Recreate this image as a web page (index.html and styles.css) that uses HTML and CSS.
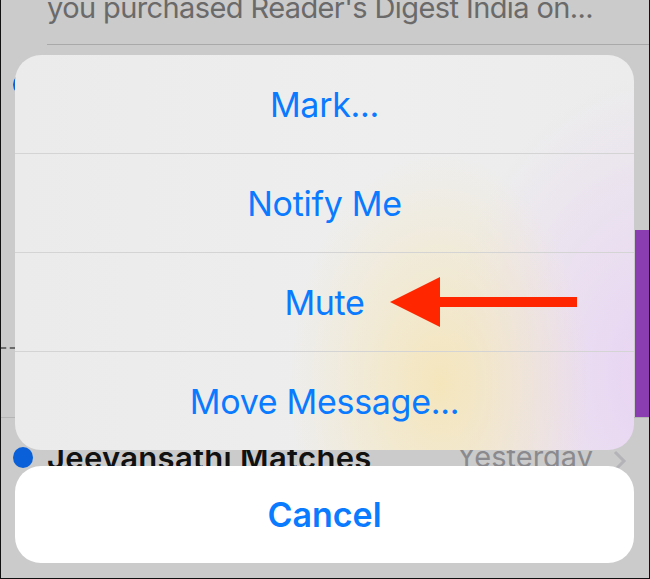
FILE: index.html
```html
<!DOCTYPE html>
<html>
<head>
<meta charset="utf-8">
<link rel="stylesheet" href="styles.css">
</head>
<body>
<div class="screen">
  <div class="list">
    <div class="preview-row">
      <div class="preview">you purchased Reader's Digest India on...</div>
    </div>
    <div class="mail-row">
      <div class="lead">
        <span class="dot dot-top"></span>
        <span class="dash"></span>
      </div>
      <div class="trail">
        <div class="swipe"></div>
      </div>
    </div>
    <div class="mail-row2">
      <span class="dot"></span>
      <span class="sender">Jeevansathi Matches</span>
      <span class="date">Yesterday</span>
      <svg class="chev" width="14" height="22" viewBox="0 0 14 22"><path d="M2 2 L11 11 L2 20" fill="none" stroke="#b3b3b8" stroke-width="3"/></svg>
    </div>
  </div>

  <div class="sheet">
    <div class="group">
      <div class="action">Mark...</div>
      <div class="action">Notify Me</div>
      <div class="action">Mute</div>
      <div class="action">Move Message...</div>
    </div>
    <div class="cancel">Cancel</div>
  </div>

  <svg class="arrow" width="200" height="60" viewBox="0 0 200 60">
    <polygon points="0,25 50,0 50,20 187,20 187,30 50,30 50,50" fill="#ff2600"/>
  </svg>
</div>
</body>
</html>
```

FILE: styles.css
```css
* { box-sizing: border-box; }
html, body { margin: 0; padding: 0; background: #fff; }
.screen {
  width: 650px;
  height: 579px;
  position: relative;
  overflow: hidden;
  background: #cbcbcb;
  border-left: 1px solid #111;
  border-right: 1px solid #111;
  border-bottom: 1px solid #111;
  font-family: Inter, "Noto Sans", sans-serif;
}
.list { display: flex; flex-direction: column; }
.preview-row {
  height: 45px;
  margin-left: 46px;
  border-bottom: 1px solid #a9a9a9;
  overflow: hidden;
}
.preview {
  font-size: 29px;
  line-height: 30px;
  margin-top: -7px;
  letter-spacing: -0.6px;
  color: #6a6a6a;
  white-space: nowrap;
}
.mail-row {
  height: 373px;
  display: flex;
  justify-content: space-between;
  border-bottom: 1px solid #b5b5b5;
}
.lead {
  width: 40px;
  display: flex;
  flex-direction: column;
  padding-top: 29px;
}
.dot {
  width: 20px;
  height: 21px;
  border-radius: 50%;
  background: #0a60d8;
  display: inline-block;
  flex: none;
}
.dot-top { margin-left: 12px; }
.dash {
  margin-top: 252px;
  width: 14px;
  height: 0;
  border-top: 2px dashed #6a6a6a;
}
.trail {
  display: flex;
  flex-direction: column;
  justify-content: flex-end;
}
.swipe {
  width: 14px;
  height: 187px;
  background: #8a3db0;
}
.mail-row2 {
  display: flex;
  height: 70px;
  padding-left: 12px;
  padding-top: 4px;
  align-items: flex-start;
}
.mail-row2 .dot { margin-top: 25px; }
.sender {
  margin-left: 14px;
  font-size: 31px;
  font-weight: 600;
  letter-spacing: 0.3px;
  color: #111;
  margin-top: 17px;
}
.date {
  margin-left: auto;
  margin-top: 17px;
  font-size: 29px;
  color: #8a8a8e;
}
.chev { margin: 28px 22px 0 20px; }

.sheet {
  position: absolute;
  left: 14px;
  top: 55px;
  width: 619px;
  display: flex;
  flex-direction: column;
  gap: 16px;
}
.group {
  height: 395px;
  border-radius: 26px;
  overflow: hidden;
  display: flex;
  flex-direction: column;
  background:
    radial-gradient(ellipse 150px 230px at 425px 330px, rgba(245,229,185,0.95), rgba(245,229,185,0) 100%),
    radial-gradient(ellipse 220px 300px at 650px 320px, rgba(232,210,244,1), rgba(232,210,244,0) 100%),
    linear-gradient(90deg, #ebebeb, #eeeeee 60%, #ececec);
}
.action {
  flex: 1;
  display: flex;
  align-items: center;
  justify-content: center;
  font-size: 34px;
  letter-spacing: -0.3px;
  color: #0a7aff;
  border-top: 1.5px solid #d4d4d4;
}
.action:first-child { border-top: none; }
.cancel {
  height: 97px;
  border-radius: 26px;
  background: #ffffff;
  display: flex;
  align-items: center;
  justify-content: center;
  font-size: 34px;
  font-weight: 600;
  color: #0a7aff;
}
.arrow {
  position: absolute;
  left: 389px;
  top: 277px;
}
```
